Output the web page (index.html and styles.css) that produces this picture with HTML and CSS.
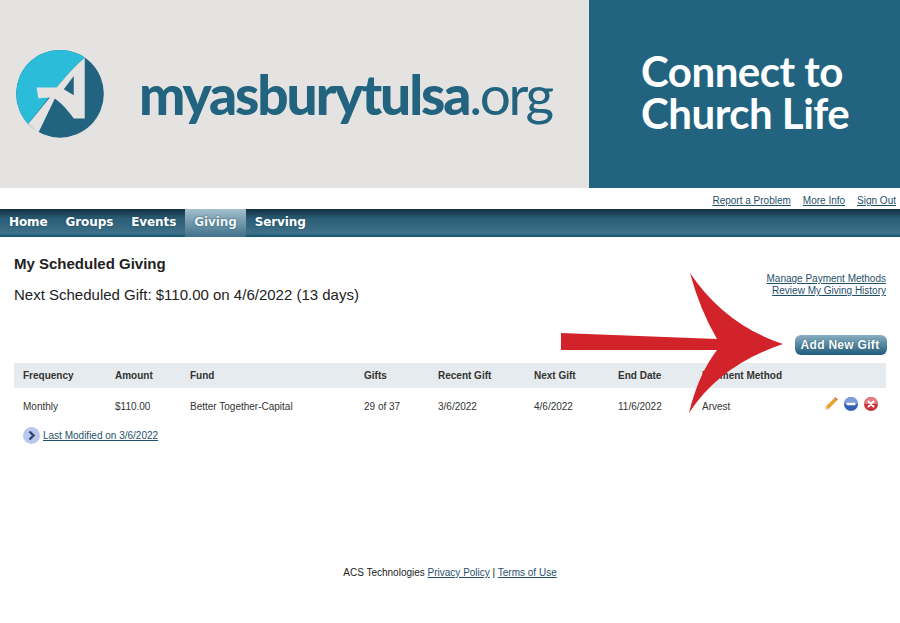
FILE: index.html
```html
<!DOCTYPE html>
<html lang="en">
<head>
    <meta charset="UTF-8">
    <meta name="viewport" content="width=device-width, initial-scale=1.0">
    <title>My Scheduled Giving</title>
    <link rel="stylesheet" href="styles.css">
</head>
<body>
    <header class="banner">
        <div class="banner-left">
            <svg class="logo" viewBox="48 62 265 265" aria-hidden="true">
                <clipPath id="logo-clip"><circle cx="180.500" cy="194" r="132"/></clipPath>
                <circle cx="180.500" cy="194" r="132" fill="#22637f"/>
                <path d="M48 62H255V85C225 110 195 145 170 175L85 285H48Z" fill="#2bbcd9" clip-path="url(#logo-clip)"/>
                <path d="M255 85V268H222C205 245 185 222 165 208L115 312 85 285 150 205 115 207 110 175 170 175C195 145 225 110 255 85Z" fill="#e4e3e1"/>
                <path d="M222 140V198L192 180Z" fill="#22637f"/>
            </svg>
            <div class="wordmark">myasburytulsa<span class="wordmark-org">.org</span></div>
        </div>
        <div class="banner-right">
            <span>Connect to</span>
            <span>Church Life</span>
        </div>
    </header>

    <div class="top-links">
        <a href="#">Report a Problem</a>
        <a href="#">More Info</a>
        <a href="#">Sign Out</a>
    </div>

    <nav class="main-nav">
        <a href="#">Home</a>
        <a href="#">Groups</a>
        <a href="#">Events</a>
        <a href="#" class="active">Giving</a>
        <a href="#">Serving</a>
    </nav>

    <main class="content">
        <div class="page-head">
            <div>
                <h1>My Scheduled Giving</h1>
                <p class="next-gift">Next Scheduled Gift: $110.00 on 4/6/2022 (13 days)</p>
            </div>
            <div class="side-links">
                <a href="#">Manage Payment Methods</a>
                <a href="#">Review My Giving History</a>
            </div>
        </div>

        <div class="actions">
            <button type="button" class="btn">Add New Gift</button>
        </div>

        <table class="gifts">
            <thead>
                <tr>
                    <th class="col-freq">Frequency</th>
                    <th class="col-amount">Amount</th>
                    <th class="col-fund">Fund</th>
                    <th class="col-gifts">Gifts</th>
                    <th class="col-recent">Recent Gift</th>
                    <th class="col-next">Next Gift</th>
                    <th class="col-end">End Date</th>
                    <th class="col-method">Payment Method</th>
                    <th></th>
                </tr>
            </thead>
            <tbody>
                <tr>
                    <td>Monthly</td>
                    <td>$110.00</td>
                    <td>Better Together-Capital</td>
                    <td>29 of 37</td>
                    <td>3/6/2022</td>
                    <td>4/6/2022</td>
                    <td>11/6/2022</td>
                    <td>Arvest</td>
                    <td class="row-icons">
                        <svg class="icon-pencil" viewBox="0 0 14 14" aria-hidden="true">
                            <path d="M1 13l.8-3.400 2.600 2.600Z" fill="#e9cfa0"/>
                            <path d="M1.800 9.600 10.400 1l2.600 2.600-8.600 8.600Z" fill="#e9a338"/>
                            <path d="M10.400 1l1-.8 2.400 2.400-.8 1Z" fill="#c9504a"/>
                        </svg>
                        <svg class="icon-round" viewBox="0 0 14 14" aria-hidden="true">
                            <circle cx="7" cy="7" r="7" fill="#3560b8"/>
                            <path d="M0 7a7 7 0 0 1 14 0Z" fill="#7f9bd8"/>
                            <rect x="2.500" y="5.700" width="9" height="2.600" rx="1" fill="#fff"/>
                        </svg>
                        <svg class="icon-round" viewBox="0 0 14 14" aria-hidden="true">
                            <circle cx="7" cy="7" r="7" fill="#c8323a"/>
                            <path d="M0 7a7 7 0 0 1 14 0Z" fill="#e07d80"/>
                            <path d="M4.500 4.500l5 5M9.500 4.500l-5 5" stroke="#fff" stroke-width="2" stroke-linecap="round"/>
                        </svg>
                    </td>
                </tr>
            </tbody>
        </table>

        <div class="modified">
            <svg class="icon-expand" viewBox="0 0 17 17" aria-hidden="true">
                <circle cx="8.500" cy="8.500" r="8.500" fill="#b9c8ec"/>
                <path d="M6.500 4.500l4 4-4 4" fill="none" stroke="#33466f" stroke-width="2.400"/>
            </svg>
            <a href="#">Last Modified on 3/6/2022</a>
        </div>
    </main>

    <footer class="site-footer">
        ACS Technologies <a href="#">Privacy Policy</a> | <a href="#">Terms of Use</a>
    </footer>

    <svg class="big-arrow" viewBox="0 0 900 623" aria-hidden="true">
        <path d="M561 333 717 339Q700 310 690 273 725 325 783 344 720 365 689 413 698 375 717 350H561Z" fill="#d2232a"/>
    </svg>
</body>
</html>
```

FILE: styles.css
```css
body {
    margin: 0;
    padding: 0;
    position: relative;
    height: 623px;
    overflow: hidden;
    font-family: "Liberation Sans", Arial, sans-serif;
    background: #fff;
    color: #222;
}

a {
    color: #1f4f6b;
}

.banner {
    display: flex;
    height: 188px;
}

.banner-left {
    width: 589px;
    flex: none;
    display: flex;
    align-items: center;
    gap: 35px;
    padding-left: 16px;
    box-sizing: border-box;
    background: #e4e3e1;
}

.logo {
    flex: none;
    width: 88px;
    height: 88px;
}

.wordmark {
    font-family: "Lato", sans-serif;
    font-size: 55px;
    font-weight: 900;
    letter-spacing: -2.100px;
    color: #22637f;
}

.wordmark-org {
    font-weight: 400;
    letter-spacing: -2.500px;
}

.banner-right {
    flex: 1;
    padding: 0 0 4px 52px;
    display: flex;
    flex-direction: column;
    justify-content: center;
    background: #22637f;
    color: #fff;
    font-family: "Lato", sans-serif;
    font-size: 42px;
    font-weight: 700;
    line-height: 42px;
    letter-spacing: -0.500px;
}

.top-links {
    height: 21px;
    box-sizing: border-box;
    display: flex;
    justify-content: flex-end;
    align-items: center;
    gap: 12px;
    padding: 4px 4px 0 0;
    font-size: 10px;
}

.main-nav {
    display: flex;
    height: 28px;
    background: linear-gradient(#10303f, #2b5e77 35%, #3f7189 90%, #1c5a78 92%);
}

.main-nav a {
    padding: 0 9px;
    line-height: 26px;
    font-family: "DejaVu Sans", sans-serif;
    font-size: 12px;
    font-weight: 700;
    letter-spacing: -0.100px;
    color: #fff;
    text-decoration: none;
    text-shadow: 0 0 2px #1c4a60;
}

.main-nav a.active {
    background: linear-gradient(#a5bfcd, #3f7189);
    color: #eef3f6;
}

.content {
    padding: 0 14px;
}

.page-head {
    display: flex;
    justify-content: space-between;
    height: 98px;
}

h1 {
    margin: 18px 0 0;
    font-size: 15px;
    line-height: 18px;
}

.next-gift {
    margin: 13px 0 0;
    font-size: 15px;
    line-height: 18px;
}

.side-links {
    display: flex;
    flex-direction: column;
    align-items: flex-end;
    padding-top: 36px;
    font-size: 10px;
    line-height: 12px;
}

.actions {
    display: flex;
    justify-content: flex-end;
    height: 28px;
}

.btn {
    width: 92px;
    height: 20px;
    margin-right: -1px;
    padding: 0 2px 0 0;
    border: none;
    border-radius: 6px;
    background: linear-gradient(#8aaec1, #1e5c7a);
    color: #fff;
    font-family: "Liberation Sans", Arial, sans-serif;
    font-size: 12px;
    font-weight: 700;
    letter-spacing: 0.300px;
    text-shadow: 0 0 1px #1c4a60;
}

.gifts {
    width: 872px;
    table-layout: fixed;
    border-collapse: collapse;
    font-size: 10px;
}

.gifts th {
    height: 25px;
    padding: 0 0 0 9px;
    background: #e5ebee;
    color: #333;
    text-align: left;
}

.gifts td {
    height: 37px;
    padding: 0 0 0 9px;
    box-sizing: border-box;
    color: #333;
}

.col-freq { width: 83px; }
.col-amount { width: 66px; }
.col-fund { width: 165px; }
.col-gifts { width: 65px; }
.col-recent { width: 87px; }
.col-next { width: 75px; }
.col-end { width: 75px; }
.col-method { width: 110px; }

.gifts td.row-icons {
    padding: 0 8px 6px 0;
    text-align: right;
    white-space: nowrap;
}

.row-icons svg {
    display: inline-block;
    vertical-align: middle;
}

.icon-pencil {
    width: 14px;
    height: 14px;
}

.icon-round {
    width: 14px;
    height: 14px;
    margin-left: 3px;
}

.modified {
    display: flex;
    align-items: center;
    gap: 3px;
    padding-left: 9px;
    margin-top: 2px;
    font-size: 10px;
}

.icon-expand {
    width: 17px;
    height: 17px;
}

.site-footer {
    margin-top: 123px;
    text-align: center;
    font-size: 10px;
}

.big-arrow {
    position: absolute;
    left: 0;
    top: 0;
    width: 900px;
    height: 623px;
    pointer-events: none;
}
```
